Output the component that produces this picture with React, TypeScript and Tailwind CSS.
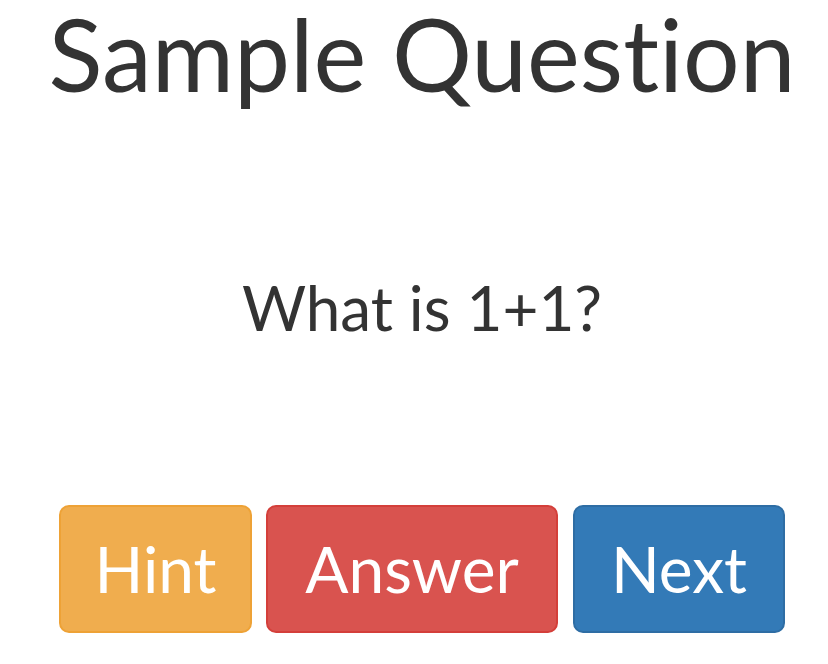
import React from "react";

export default function App() {
  return (
    <div
      className="w-[828px] h-[664px] bg-white text-[#333333] pl-[16px] flex flex-col items-center [font-variant-ligatures:none]"
      style={{ fontFamily: "Lato, 'Open Sans', sans-serif" }}
    >
      <h1 className="text-[100px] leading-[120px] mt-[-7px] font-normal whitespace-nowrap">Sample Question</h1>
      <p className="text-[62px] leading-[80px] mt-[154px] whitespace-nowrap">What is 1+1?</p>
      <div className="flex gap-[14px] mt-[158px]">
        <button className="w-[193px] h-[128px] rounded-[10px] border-2 border-[#eea236] bg-[#f0ad4e] text-white text-[64px] leading-none">Hint</button>
        <button className="w-[292px] h-[128px] rounded-[10px] border-2 border-[#d43f3a] bg-[#d9534f] text-white text-[64px] leading-none">Answer</button>
        <button className="w-[212px] h-[128px] ml-[1px] rounded-[10px] border-2 border-[#2e6da4] bg-[#337ab7] text-white text-[64px] leading-none">Next</button>
      </div>
    </div>
  );
}
